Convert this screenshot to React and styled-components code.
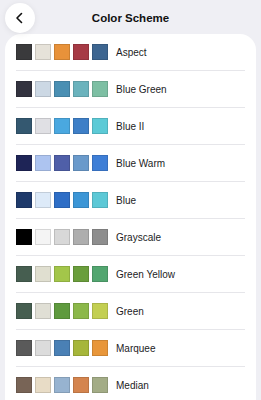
import React from 'react'
import styled, { createGlobalStyle } from 'styled-components'

const Global = createGlobalStyle`
  html, body {
    margin: 0;
    padding: 0;
    background: #efeff4;
    font-family: 'Liberation Sans', Arial, sans-serif;
    -webkit-font-smoothing: antialiased;
  }
`

const schemes = [
  { name: 'Aspect', colors: ['#3a3a3c', '#e6e2d9', '#e8923a', '#a63a45', '#3d6590'] },
  { name: 'Blue Green', colors: ['#33333f', '#ccd8e4', '#4a8fb3', '#6bb3bd', '#7dbfa3'] },
  { name: 'Blue II', colors: ['#345870', '#e0e0e4', '#4aa8e0', '#3e7fc7', '#5ccad6'] },
  { name: 'Blue Warm', colors: ['#1e2456', '#adc4f0', '#4f5fa8', '#6a9acb', '#3e7ed6'] },
  { name: 'Blue', colors: ['#1e3a6b', '#ddeaf8', '#2e6ec6', '#3c96d6', '#5cc8d6'] },
  { name: 'Grayscale', colors: ['#000000', '#f4f4f4', '#d8d8d8', '#aeaeae', '#8e8e8e'] },
  { name: 'Green Yellow', colors: ['#465e50', '#e0dfd0', '#a3c64a', '#6a9e3c', '#52a670'] },
  { name: 'Green', colors: ['#465e50', '#e0dfd5', '#5f9a3e', '#8cb84a', '#c3cf52'] },
  { name: 'Marquee', colors: ['#5a5a5a', '#dcdcdc', '#4a80b5', '#a6b63a', '#e8963a'] },
  { name: 'Median', colors: ['#786456', '#e8dcc6', '#97b3d0', '#d4844e', '#a3ac86'] },
]

const Page = styled.div`
  width: 261px;
  height: 400px;
  overflow: hidden;
`

const Header = styled.div`
  display: grid;
  grid-template-columns: 30px 1fr 30px;
  align-items: center;
  padding: 3px 5px 0;
  height: 30px;
`

const BackButton = styled.button`
  width: 30px;
  height: 30px;
  border-radius: 50%;
  border: none;
  background: #fff;
  box-shadow: 0 1px 6px rgba(0, 0, 0, 0.08);
  display: flex;
  align-items: center;
  justify-content: center;
  padding: 0;
`

const Title = styled.h1`
  margin: 0;
  text-align: center;
  font-size: 11.5px;
  font-weight: 700;
  color: #111;
`

const Card = styled.div`
  margin: 1px 5px 0;
  background: #fff;
  border-radius: 16px 16px 0 0;
`

const Row = styled.div`
  display: flex;
  align-items: center;
  gap: 8px;
  margin: 0 11px;
  padding: 10px 0;
  border-bottom: 1px solid #e6e6ea;
`

const Swatches = styled.div`
  display: flex;
  gap: 3px;
`

const Swatch = styled.div`
  width: 16px;
  height: 16px;
  box-sizing: border-box;
  background: ${p => p.color};
  border: 1px solid rgba(0, 0, 0, 0.12);
`

const Name = styled.span`
  font-size: 10px;
  color: #1c1c1e;
`

export default function App() {
  return (
    <Page>
      <Global />
      <Header>
        <BackButton aria-label="Back">
          <svg width="12" height="12" viewBox="0 0 12 12" fill="none">
            <path d="M7.5 1.5L3 6l4.5 4.5" stroke="#111" strokeWidth="1.6" strokeLinecap="round" strokeLinejoin="round" />
          </svg>
        </BackButton>
        <Title>Color Scheme</Title>
        <span />
      </Header>
      <Card>
        {schemes.map(s => (
          <Row key={s.name}>
            <Swatches>
              {s.colors.map((c, i) => (
                <Swatch key={i} color={c} />
              ))}
            </Swatches>
            <Name>{s.name}</Name>
          </Row>
        ))}
      </Card>
    </Page>
  )
}
